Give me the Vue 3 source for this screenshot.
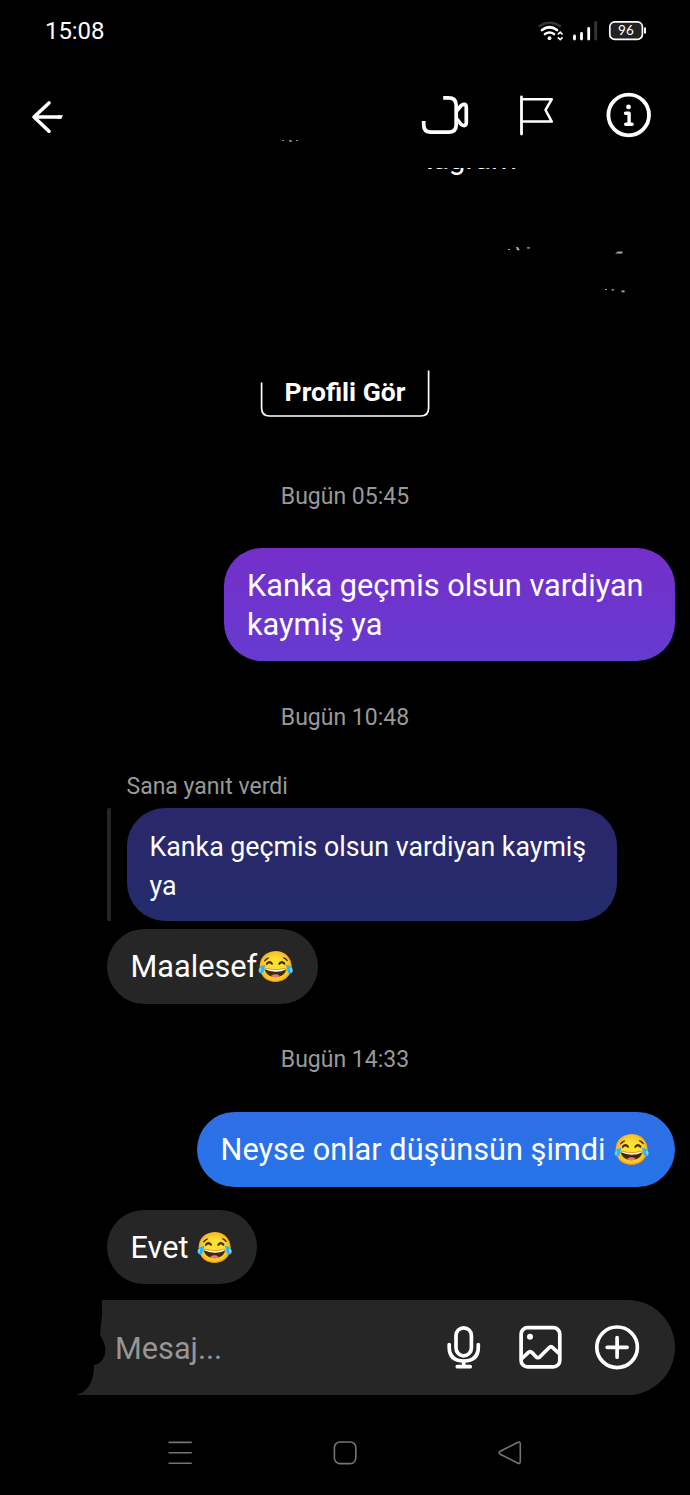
<script setup>
</script>

<template>
  <div class="phone">
    <header class="status">
      <span class="clock">15:08</span>
      <svg class="sys" width="112" height="24" viewBox="536 19 112 24" fill="none">
        <path d="M539.5 26Q549.5 19.5 560 26" stroke="#343434" stroke-width="2.5" stroke-linecap="round" />
        <path d="M542 30Q549.5 24.5 557 30M545 34Q549.5 31 554 34" stroke="#fff" stroke-width="2.7" stroke-linecap="round" />
        <circle cx="549.5" cy="38.2" r="1.9" fill="#fff" />
        <path d="M557.8 34.5 560.2 32.2 562.6 34.5M557.8 37.3 560.2 39.6 562.6 37.3" stroke="#fff" stroke-width="1.7" />
        <path d="M574.5 36V39M581.5 33.5V39M588.7 28.5V39" stroke="#fff" stroke-width="2.8" stroke-linecap="round" />
        <path d="M595.7 22.5V39" stroke="#343434" stroke-width="3" stroke-linecap="round" />
        <rect x="609.8" y="21.8" width="32.6" height="17.6" rx="5" fill="#222" stroke="#fff" stroke-width="1.7" />
        <path d="M645 27.5V33.5" stroke="#fff" stroke-width="2" />
        <text x="625.9" y="35.4" class="battery" text-anchor="middle">96</text>
      </svg>
    </header>

    <nav class="appbar">
      <svg width="34" height="36" viewBox="31 99 34 36" fill="none" stroke="#fff" stroke-width="3.6" stroke-linecap="round" stroke-linejoin="round">
        <path d="M49 103 34 117 49 131.2M34 117H60" />
        <path d="M58 115.2H63L61.3 118.8H58Z" fill="#fff" stroke="none" />
      </svg>
      <div class="actions">
        <svg width="48" height="44" viewBox="421 94 48 44" fill="none" stroke="#fff" stroke-width="3.7" stroke-linejoin="round">
          <path d="M443.2 97.9H448.5Q456.2 97.9 456.2 105.5V125Q456.2 132.2 448.5 132.2H431Q423.7 132.2 423.7 125V121" />
          <path d="M457 110.5 461.2 105.5Q466.3 102.3 466.3 108V122Q466.3 127.5 461.2 124.5L457 119" />
        </svg>
        <svg width="38" height="44" viewBox="518 94 38 44" fill="none" stroke="#fff" stroke-width="2.5" stroke-linejoin="round" stroke-linecap="round">
          <path d="M521.5 97V134" stroke-width="2.8" />
          <path d="M522 99.2H551.8L545.5 110 551.8 121.6H522" />
        </svg>
        <svg width="46" height="46" viewBox="605.5 92 46 46" fill="none">
          <circle cx="628.2" cy="115" r="20.3" stroke="#fff" stroke-width="3.8" />
          <circle cx="628" cy="106.9" r="2.4" fill="#fff" />
          <path d="M625 113.3H628.6V124.2M625.2 124.2H631.6" stroke="#fff" stroke-width="3.4" stroke-linecap="round" stroke-linejoin="round" />
        </svg>
      </div>
      <svg class="bits-top" width="24" height="6" viewBox="280 138 24 6" fill="#8a8a8a">
        <path d="M282 140H284V141H282ZM288.5 140H291.5L292 142H290ZM296 140H298V141H296Z" />
      </svg>
    </nav>

    <section class="profile">
      <div class="service"><span>tagram</span></div>
      <svg class="bits" width="130" height="54" viewBox="505 244 130 54" fill="#aaa">
        <path d="M508 249H510V250H508ZM516 247H518L519.8 250.2H517ZM527 247.3H530V248.4H527ZM615 253.6 618 251.5H622.5V253.5ZM605 289H607V290H605ZM611.5 289.2H614V290.6H611.5ZM621.5 290.4H624.6V292.3H621.5Z" />
      </svg>
      <div class="profile-button">
        <svg width="170" height="48" viewBox="260 370 170 48" fill="none" stroke="#fff" stroke-width="1.7">
          <path d="M261.6 382.5V408Q261.6 416 269.6 416H420.6Q428.6 416 428.6 408V370.5" />
        </svg>
        <span>Profili Gör</span>
        <i></i>
      </div>
    </section>

    <main class="chat">
      <time class="t1">Bugün 05:45</time>
      <div class="bubble sent purple">Kanka geçmis olsun vardiyan<br>kaymiş ya</div>
      <time class="t2">Bugün 10:48</time>
      <p class="reply-label">Sana yanıt verdi</p>
      <div class="reply">
        <div class="bubble quoted">Kanka geçmis olsun vardiyan kaymiş<br>ya</div>
      </div>
      <div class="bubble received maalesef">Maalesef<span class="emoji">😂</span></div>
      <time class="t3">Bugün 14:33</time>
      <div class="bubble sent blue">Neyse onlar düşünsün şimdi <span class="emoji">😂</span></div>
      <div class="bubble received evet">Evet <span class="emoji">😂</span></div>
    </main>

    <footer class="composer">
      <span class="placeholder">Mesaj...</span>
      <svg width="196" height="48" viewBox="445 1324 196 48" fill="none" stroke="#fff" stroke-width="3.7" stroke-linecap="round" stroke-linejoin="round">
        <rect x="456" y="1327.8" width="15.4" height="28" rx="7.7" />
        <path d="M449.2 1344.5V1347Q449.2 1361 463.7 1361Q478.3 1361 478.3 1347V1344.5M463.7 1361V1366.5M457.3 1366.7H470.2" />
        <rect x="521.1" y="1327.7" width="38.7" height="39.2" rx="6.5" />
        <path d="M522 1358.5 528.2 1352.6Q530.3 1350.6 532.3 1352.7L535.7 1356.5Q538 1359 540.2 1356.5L549 1347.8Q551 1345.8 553 1347.8L559 1353.5" />
        <circle cx="530" cy="1336.8" r="3" fill="#fff" stroke="none" />
        <circle cx="617.1" cy="1347.3" r="20.3" />
        <path d="M607.2 1347.3H627.1M617.1 1337.5V1357.2" />
      </svg>
    </footer>

    <nav class="system-nav">
      <svg width="356" height="28" viewBox="167 1439 356 28" fill="none" stroke="#747474" stroke-width="1.6" stroke-linejoin="round">
        <path d="M168.5 1442.4H191.8M168.5 1452.8H191.8M168.5 1463.2H191.8" />
        <rect x="334.4" y="1442" width="21.4" height="21.6" rx="5.5" />
        <path d="M500.2 1451.2 517.5 1442.5Q520.3 1441.3 520.3 1444V1461.5Q520.3 1464.4 517.5 1463L500.2 1454.2Q498 1452.7 500.2 1451.2Z" />
      </svg>
    </nav>
  </div>
</template>

<style>
body { margin: 0; background: #000; }
</style>

<style scoped>
.phone {
  width: 690px;
  height: 1495px;
  overflow: hidden;
  display: flex;
  flex-direction: column;
  background: #000;
  color: #fff;
  font-family: Roboto, "Liberation Sans", sans-serif;
}
.status {
  height: 62px;
  flex: none;
  box-sizing: border-box;
  display: flex;
  justify-content: space-between;
  align-items: center;
  padding: 0 42px 0 45px;
}
.clock { font-size: 24px; letter-spacing: -.1px; margin-top: -1px; }
.battery { font: 13.5px Lato, sans-serif; fill: #fff; }
.appbar {
  position: relative;
  height: 106px;
  flex: none;
  box-sizing: border-box;
  display: flex;
  justify-content: space-between;
  align-items: flex-start;
  padding: 30px 38.5px 0 31px;
}
.appbar > svg:first-child { margin-top: 7px; }
.actions { display: flex; }
.actions svg { margin-top: 2px; }
.actions svg:nth-child(2) { margin-left: 49px; }
.actions svg:nth-child(3) { margin: 0 0 0 49.5px; }
.bits-top { position: absolute; left: 280px; top: 76px; }
.profile {
  position: relative;
  height: 250px;
  flex: none;
  display: flex;
  flex-direction: column;
  justify-content: space-between;
}
.service {
  margin-left: 428px;
  width: 100px;
  height: 12px;
  overflow: hidden;
  font-size: 29.6px;
}
.service span { display: block; line-height: 30px; margin: -24.5px 0 0 -5px; }
.bits { position: absolute; left: 505px; top: 76px; }
.profile-button {
  position: relative;
  align-self: center;
  width: 170px;
  height: 48px;
  display: flex;
}
.profile-button span {
  position: absolute;
  inset: 8px 0 auto;
  line-height: 28px;
  text-align: center;
  font-size: 26.5px;
  font-weight: 700;
}
.profile-button i { position: absolute; left: 20px; top: 6px; width: 90px; height: 6px; background: #000; }
.chat { display: flex; flex-direction: column; height: 882px; flex: none; }
time {
  align-self: center;
  height: 30px;
  line-height: 31px;
  color: #999;
  font-size: 23px;
}
.t1 { margin-top: 63px; }
.t2 { margin-top: 41px; }
.t3 { margin-top: 40px; }
.bubble {
  box-sizing: border-box;
  white-space: nowrap;
  border-radius: 38px;
  padding: 19px 23px 0;
  font-size: 30.7px;
  line-height: 38.5px;
}
.sent { align-self: flex-end; margin-right: 15px; }
.purple { width: 451px; height: 113px; margin-top: 37px; background: linear-gradient(#752fca, #653bd0); }
.reply-label { margin: 39px 0 0 126.5px; height: 32px; line-height: 32px; font-size: 23px; color: #999; }
.reply { margin: 5px 0 0 107px; display: flex; border-left: 4px solid #262626; height: 113px; border-radius: 2px; }
.quoted { width: 490px; height: 113px; margin-left: 15.5px; padding-top: 20px; font-size: 26.75px; background: linear-gradient(#2c276b, #232c6c); }
.received { margin-left: 107px; padding-left: 23.5px; background: #262626; height: 74.5px; }
.maalesef { width: 211px; margin-top: 8px; }
.blue { width: 478px; height: 74.5px; margin-top: 38.5px; padding-left: 23.5px; background: linear-gradient(#306ee5, #2574e9); }
.evet { width: 150px; margin-top: 23px; }
.emoji { font-family: "Noto Color Emoji", sans-serif; font-size: 30px; line-height: 1; }
.composer {
  height: 95px;
  flex: none;
  box-sizing: border-box;
  margin: 0 15px 0 76px;
  padding: 0 34px 0 39px;
  display: flex;
  align-items: center;
  justify-content: space-between;
  background: #262626;
  clip-path: path("M26 0H551.5A47.5 47.5 0 0 1 551.5 95H0Q8 93 13 86Q18 78 18 65Q24 64 27 59Q33 49 24 35L26 14Z");
}
.placeholder { color: #969696; font-size: 30.7px; padding-top: 2px; }
.system-nav { padding: 44px 0 0 167px; }
</style>
